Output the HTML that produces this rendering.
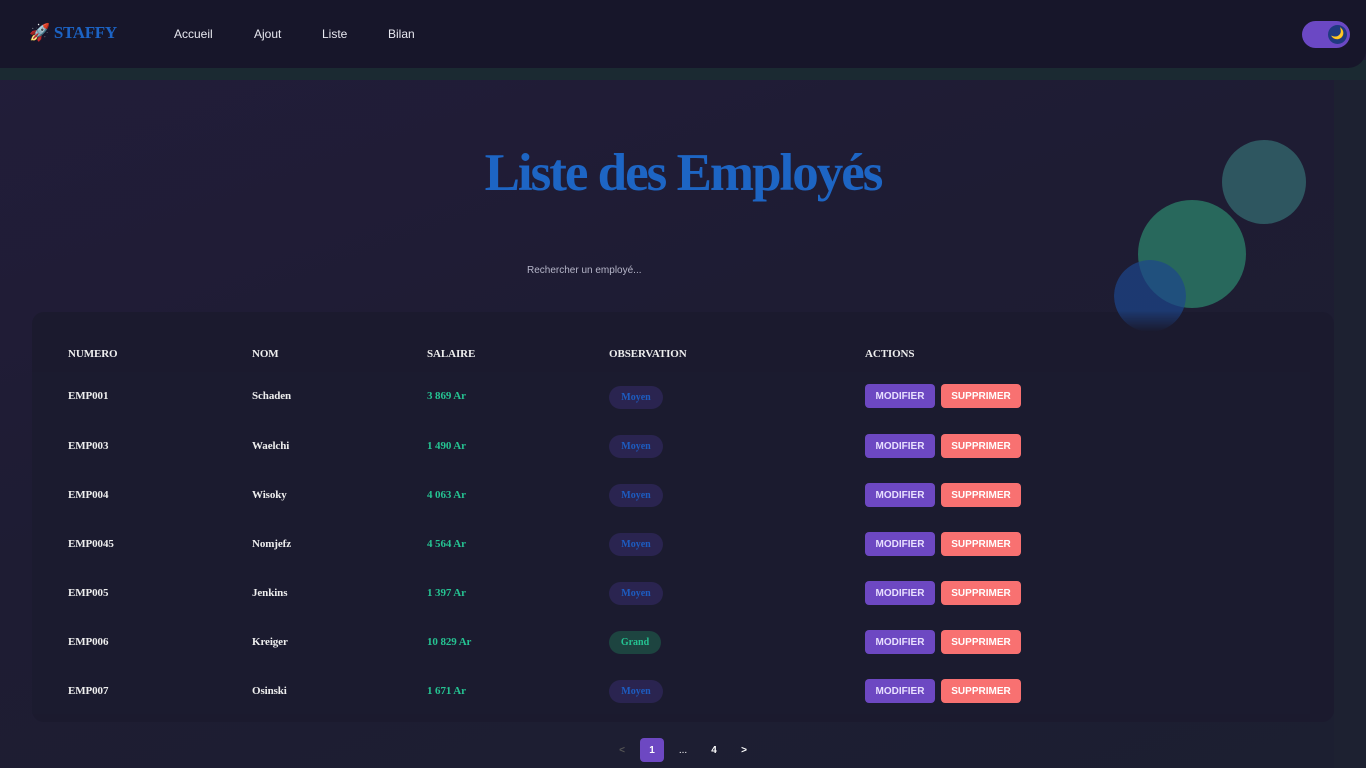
<!DOCTYPE html>
<html><head><meta charset="utf-8"><style>
*{margin:0;padding:0;box-sizing:border-box}
body{width:1366px;height:768px;overflow:hidden;background:linear-gradient(160deg,#221d3a 0%,#1e1c33 45%,#1c1f31 100%);font-family:"Liberation Sans",sans-serif;position:relative}
.strip{position:absolute;left:0;top:60px;width:1366px;height:20px;background:#1b2a32}
.nav{position:absolute;left:0;top:0;width:1366px;height:68px;background:#17162a;border-radius:0 0 18px 0}
.logo{position:absolute;left:29px;top:23px;font:bold 17px "Liberation Serif",serif;color:#1c63c4;letter-spacing:-0.3px}
.nav a{position:absolute;top:27px;font-size:12px;color:#e8e8f0;text-decoration:none}
.tog{position:absolute;left:1302px;top:21px;width:48px;height:27px;border-radius:14px;background:#6b48c4}
.tog i{position:absolute;right:3px;top:4px;width:19px;height:19px;border-radius:50%;background:#203a80;font-style:normal;font-size:11px;line-height:19px;text-align:center;color:#f5c400}
.right{position:absolute;left:1334px;top:80px;width:32px;height:688px;background:#1d2131}
h1{position:absolute;left:0;width:1366px;top:143px;text-align:center;font:bold 53px "Liberation Serif",serif;letter-spacing:-2px;color:#1d65c4}
.search{position:absolute;left:527px;top:265px;font-size:10px;color:#b5b5c8}
.c{position:absolute;border-radius:50%}
.card{position:absolute;left:32px;top:312px;width:1302px;height:410px;background:rgba(27,26,46,.96);border-radius:12px}
.rows{position:absolute;left:32px;top:372px;width:1278px;height:342px;background:#1b1b2f}
.t{position:absolute;font:bold 11px "Liberation Serif",serif;color:#eee;letter-spacing:-0.1px}
.g{color:#25c392}
.pill{position:absolute;height:23px;border-radius:12px;font:bold 10px "Liberation Serif",serif;line-height:23px;text-align:center}
.m{background:#2a2450;color:#1d5cc0;width:54px}
.gr{background:#1d4440;color:#25c392;width:52px}
.b{position:absolute;height:24px;border-radius:4px;font:bold 10px "Liberation Sans",sans-serif;line-height:25px;text-align:center;color:#fff}
.mo{background:#6d48c2;width:70px;color:#e8e0ff}
.su{background:#f87171;width:80px}
.pg{position:absolute;top:738px;font-size:10px;color:#fff;font-weight:bold;text-align:center;line-height:25px;height:24px}
</style></head><body>
<div class="strip"></div>
<div class="right"></div>
<div class="nav">
<div class="logo">🚀 STAFFY</div>
<a style="left:174px">Accueil</a><a style="left:254px">Ajout</a><a style="left:322px">Liste</a><a style="left:388px">Bilan</a>
<div class="tog"><i>🌙</i></div>
</div>
<h1>Liste des Employés</h1>
<div class="search">Rechercher un employé...</div>
<div class="c" style="left:1222px;top:140px;width:84px;height:84px;background:#2e5660"></div>
<div class="c" style="left:1138px;top:200px;width:108px;height:108px;background:#28685c"></div>
<div class="card"></div>
<div class="c" style="left:1114px;top:260px;width:72px;height:72px;background:rgba(28,70,140,.7);-webkit-mask-image:linear-gradient(#000 70%,transparent 100%);mask-image:linear-gradient(#000 70%,transparent 100%)"></div>
<div class="rows"></div>
<div class="t" style="left:68px;top:348px">NUMERO</div>
<div class="t" style="left:252px;top:348px">NOM</div>
<div class="t" style="left:427px;top:348px">SALAIRE</div>
<div class="t" style="left:609px;top:348px">OBSERVATION</div>
<div class="t" style="left:865px;top:348px">ACTIONS</div>
<div class="t" style="left:68px;top:390px">EMP001</div><div class="t" style="left:252px;top:390px">Schaden</div><div class="t g" style="left:427px;top:390px">3 869 Ar</div><div class="pill m" style="left:609px;top:386px">Moyen</div><div class="b mo" style="left:865px;top:384px">MODIFIER</div><div class="b su" style="left:941px;top:384px">SUPPRIMER</div>
<div class="t" style="left:68px;top:440px">EMP003</div><div class="t" style="left:252px;top:440px">Waelchi</div><div class="t g" style="left:427px;top:440px">1 490 Ar</div><div class="pill m" style="left:609px;top:435px">Moyen</div><div class="b mo" style="left:865px;top:434px">MODIFIER</div><div class="b su" style="left:941px;top:434px">SUPPRIMER</div>
<div class="t" style="left:68px;top:489px">EMP004</div><div class="t" style="left:252px;top:489px">Wisoky</div><div class="t g" style="left:427px;top:489px">4 063 Ar</div><div class="pill m" style="left:609px;top:484px">Moyen</div><div class="b mo" style="left:865px;top:483px">MODIFIER</div><div class="b su" style="left:941px;top:483px">SUPPRIMER</div>
<div class="t" style="left:68px;top:538px">EMP0045</div><div class="t" style="left:252px;top:538px">Nomjefz</div><div class="t g" style="left:427px;top:538px">4 564 Ar</div><div class="pill m" style="left:609px;top:533px">Moyen</div><div class="b mo" style="left:865px;top:532px">MODIFIER</div><div class="b su" style="left:941px;top:532px">SUPPRIMER</div>
<div class="t" style="left:68px;top:587px">EMP005</div><div class="t" style="left:252px;top:587px">Jenkins</div><div class="t g" style="left:427px;top:587px">1 397 Ar</div><div class="pill m" style="left:609px;top:582px">Moyen</div><div class="b mo" style="left:865px;top:581px">MODIFIER</div><div class="b su" style="left:941px;top:581px">SUPPRIMER</div>
<div class="t" style="left:68px;top:636px">EMP006</div><div class="t" style="left:252px;top:636px">Kreiger</div><div class="t g" style="left:427px;top:636px">10 829 Ar</div><div class="pill gr" style="left:609px;top:631px">Grand</div><div class="b mo" style="left:865px;top:630px">MODIFIER</div><div class="b su" style="left:941px;top:630px">SUPPRIMER</div>
<div class="t" style="left:68px;top:685px">EMP007</div><div class="t" style="left:252px;top:685px">Osinski</div><div class="t g" style="left:427px;top:685px">1 671 Ar</div><div class="pill m" style="left:609px;top:680px">Moyen</div><div class="b mo" style="left:865px;top:679px">MODIFIER</div><div class="b su" style="left:941px;top:679px">SUPPRIMER</div>
<div class="pg" style="left:614px;width:16px;color:#555">&lt;</div>
<div class="pg" style="left:640px;width:24px;background:#6d48c2;border-radius:4px">1</div>
<div class="pg" style="left:674px;width:18px;font-weight:normal">...</div>
<div class="pg" style="left:706px;width:16px">4</div>
<div class="pg" style="left:736px;width:16px">&gt;</div>
</body></html>
